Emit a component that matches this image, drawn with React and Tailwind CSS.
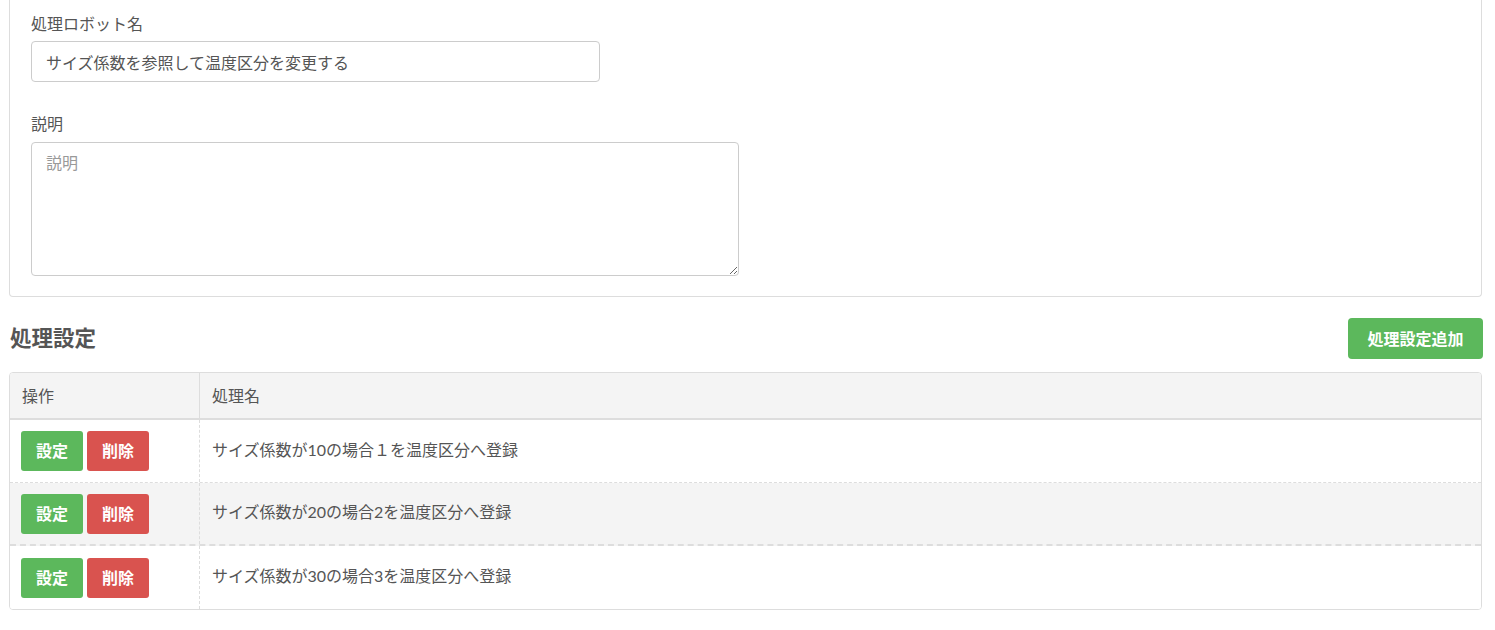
import React from 'react'

const rows = [
  { name: 'サイズ係数が10の場合１を温度区分へ登録', bg: 'bg-white', border: 'border-b border-dashed border-[#dddddd]' },
  { name: 'サイズ係数が20の場合2を温度区分へ登録', bg: 'bg-[#f4f4f4]', border: 'border-b-2 border-dashed border-[#dddddd]' },
  { name: 'サイズ係数が30の場合3を温度区分へ登録', bg: 'bg-white', border: '' },
]

const font = { fontFamily: 'Lato, "Noto Sans CJK JP", sans-serif' }

const ProcessRow = ({ row }) => (
  <div className={`flex h-[63px] ${row.bg} ${row.border}`}>
    <div className="flex w-[190px] shrink-0 items-center gap-[4px] border-r border-dashed border-[#dddddd] pl-[11px]">
      <button className="h-[40px] w-[62px] rounded-[3px] bg-[#5cb85c] text-[16px] font-bold text-white">
        設定
      </button>
      <button className="h-[40px] w-[62px] rounded-[3px] bg-[#d9534f] text-[16px] font-bold text-white">
        削除
      </button>
    </div>
    <div className="flex items-center pb-[3px] pl-[12px] text-[16px] text-[#555555]">{row.name}</div>
  </div>
)

export default function App() {
  return (
    <div className="min-h-screen bg-white pl-[9px] pr-[13px] text-[#555555]" style={font}>
      <div className="rounded-b-[4px] border-x border-b border-[#dddddd] px-[21px] pt-[14px] pb-[20px]">
        <label className="mb-[7px] block text-[16px] leading-[20px] text-[#555555]">処理ロボット名</label>
        <input
          className="block h-[41px] w-[569px] rounded-[4px] border border-[#cccccc] px-[14px] text-[16px] text-[#555555] outline-none"
          defaultValue="サイズ係数を参照して温度区分を変更する"
          style={font}
        />
        <label className="mt-[32px] mb-[8px] block text-[16px] leading-[20px] text-[#555555]">説明</label>
        <textarea
          className="block h-[134px] w-[708px] rounded-[4px] border border-[#cccccc] px-[14px] py-[8px] text-[16px] text-[#555555] placeholder-[#999999] outline-none"
          placeholder="説明"
          style={font}
        />
      </div>

      <div className="mt-[21px] mb-[13px] flex h-[41px] items-center justify-between">
        <h2 className="pl-[1px] text-[21.5px] font-bold text-[#555555]">処理設定</h2>
        <button className="-mr-[1px] h-[41px] w-[135px] rounded-[4px] bg-[#5cb85c] text-[16px] font-bold text-white">
          処理設定追加
        </button>
      </div>

      <div className="overflow-hidden rounded-[4px] border border-[#dddddd]">
        <div className="flex h-[47px] border-b-2 border-[#dddddd] bg-[#f4f4f4] text-[16px] text-[#555555]">
          <div className="flex w-[190px] shrink-0 items-center border-r border-[#dddddd] pl-[12px]">操作</div>
          <div className="flex items-center pl-[12px]">処理名</div>
        </div>
        {rows.map((row, i) => (
          <ProcessRow key={i} row={row} />
        ))}
      </div>
    </div>
  )
}
